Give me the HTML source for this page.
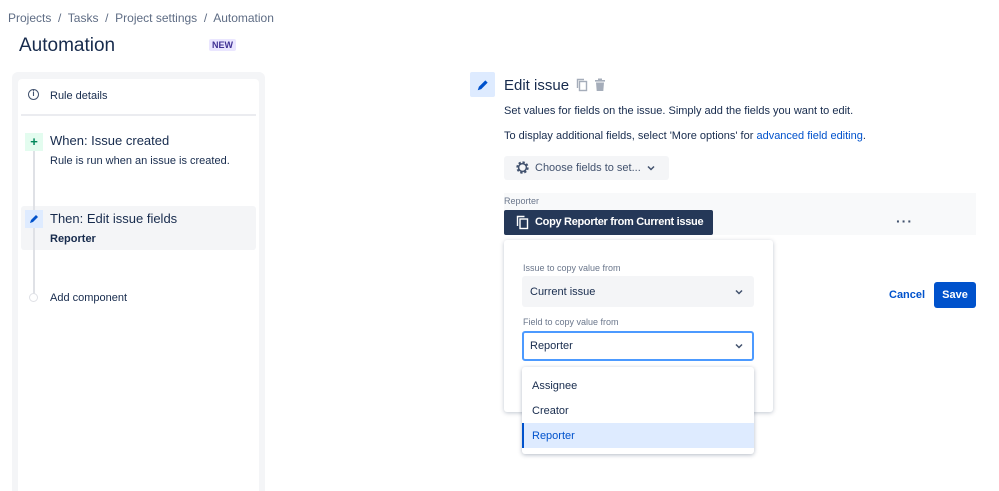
<!DOCTYPE html>
<html><head><style>
*{margin:0;padding:0;box-sizing:border-box}
html,body{width:999px;height:491px;overflow:hidden}
body{background:#fff;font-family:"Liberation Sans",sans-serif;color:#172b4d;position:relative}
.a{position:absolute;white-space:nowrap}
</style></head><body>
<div class="a" style="left:8px;top:11px;font-size:12px;color:#5e6c84">Projects &nbsp;/&nbsp; Tasks &nbsp;/&nbsp; Project settings &nbsp;/&nbsp; Automation</div>
<div class="a" style="left:19px;top:35px;font-size:19px;font-weight:500;color:#172b4d">Automation</div>
<div class="a" style="left:209px;top:39px;font-size:9px;font-weight:bold;color:#403294;background:#eae6ff;padding:1px 3px;border-radius:2px">NEW</div>

<div class="a" style="left:12px;top:72px;width:253px;height:430px;background:#f4f5f7;border-radius:6px"></div>
<div class="a" style="left:18px;top:79px;width:241px;height:420px;background:#fff;border-radius:4px"></div>
<div class="a" style="left:28px;top:89px;width:11px;height:11px;border:1.3px solid #42526e;border-radius:50%;font-size:8px;line-height:8px;text-align:center;color:#42526e;font-weight:bold">i</div>
<div class="a" style="left:50px;top:90px;font-size:11px;color:#172b4d">Rule details</div>
<div class="a" style="left:21px;top:114px;width:235px;height:2px;background:#ebecf0"></div>
<div class="a" style="left:21px;top:206px;width:235px;height:44px;background:#f4f5f7;border-radius:3px"></div>
<div class="a" style="left:33px;top:140px;width:2px;height:158px;background:#dfe1e6"></div>
<div class="a" style="left:25px;top:133px;width:18px;height:18px;background:#e3fcef;color:#00875a;font-size:13px;font-weight:bold;text-align:center;line-height:18px">+</div>
<div class="a" style="left:50px;top:133px;font-size:13px;color:#172b4d">When: Issue created</div>
<div class="a" style="left:50px;top:155px;font-size:11px;color:#172b4d">Rule is run when an issue is created.</div>
<div class="a" style="left:25px;top:210px;width:18px;height:18px;background:#deebff"></div>
<svg class="a" style="left:28px;top:213px" width="12" height="12" viewBox="0 0 12 12"><path d="M2 10 L3 7 L8 2 L10 4 L5 9 Z" fill="#0052cc"/></svg>
<div class="a" style="left:50px;top:211px;font-size:13px;color:#172b4d">Then: Edit issue fields</div>
<div class="a" style="left:50px;top:233px;font-size:11px;font-weight:bold;color:#172b4d">Reporter</div>
<div class="a" style="left:29px;top:293px;width:9px;height:9px;border:1px solid #dfe1e6;border-radius:50%;background:#fff"></div>
<div class="a" style="left:50px;top:292px;font-size:11px;color:#172b4d">Add component</div>

<div class="a" style="left:470px;top:72px;width:25px;height:25px;background:#deebff;border-radius:2px"></div>
<svg class="a" style="left:476px;top:78px" width="14" height="14" viewBox="0 0 12 12"><path d="M1.5 10.5 L2.5 7.5 L8 2 L10 4 L4.5 9.5 Z" fill="#0052cc"/></svg>
<div class="a" style="left:504px;top:77px;font-size:15px;color:#172b4d">Edit issue</div>
<svg class="a" style="left:576px;top:78px" width="13" height="14" viewBox="0 0 13 14"><rect x="3.5" y="3.5" width="7" height="9" fill="none" stroke="#a5adba" stroke-width="1.4"/><path d="M1.5 10V1.5H8" fill="none" stroke="#a5adba" stroke-width="1.4"/></svg>
<svg class="a" style="left:594px;top:78px" width="12" height="14" viewBox="0 0 12 14"><rect x="1" y="2" width="10" height="1.6" fill="#a5adba"/><rect x="4" y="0.5" width="4" height="2" fill="#a5adba"/><path d="M2 4.5H10L9.3 13H2.7Z" fill="#a5adba"/></svg>
<div class="a" style="left:504px;top:105px;font-size:11px;color:#172b4d">Set values for fields on the issue. Simply add the fields you want to edit.</div>
<div class="a" style="left:504px;top:130px;font-size:11px;color:#172b4d">To display additional fields, select 'More options' for <span style="color:#0052cc">advanced field editing</span>.</div>
<div class="a" style="left:504px;top:156px;width:165px;height:24px;background:#f4f5f7;border-radius:3px"></div>
<svg class="a" style="left:515px;top:160px" width="15" height="15" viewBox="0 0 16 16"><circle cx="8" cy="8" r="5" fill="none" stroke="#42526e" stroke-width="3.2" stroke-dasharray="2.2 1.7"/><circle cx="8" cy="8" r="4.2" fill="none" stroke="#42526e" stroke-width="1.6"/></svg>
<div class="a" style="left:535px;top:162px;font-size:11px;color:#42526e">Choose fields to set...</div>
<svg class="a" style="left:647px;top:165px" width="8" height="6" viewBox="0 0 8 6"><path d="M1 1.5L4 4.5L7 1.5" fill="none" stroke="#42526e" stroke-width="1.5"/></svg>
<div class="a" style="left:504px;top:193px;width:472px;height:42px;background:#f8f9fa"></div>
<div class="a" style="left:504px;top:196px;font-size:9px;color:#6b778c">Reporter</div>
<div class="a" style="left:504px;top:210px;width:209px;height:25px;background:#253858;border-radius:2px"></div>
<svg class="a" style="left:516px;top:215px" width="13" height="15" viewBox="0 0 13 15"><rect x="4" y="4" width="7.5" height="9.5" fill="none" stroke="#fff" stroke-width="1.4"/><path d="M1.5 11V1.5H8.5" fill="none" stroke="#fff" stroke-width="1.4"/></svg>
<div class="a" style="left:535px;top:216px;font-size:11px;font-weight:bold;color:#fff;letter-spacing:-0.3px">Copy Reporter from Current issue</div>
<div class="a" style="left:896px;top:213px;font-size:14px;font-weight:bold;color:#42526e;letter-spacing:1px">···</div>

<div class="a" style="left:504px;top:240px;width:269px;height:172px;background:#fff;border-radius:3px;box-shadow:0 1px 4px rgba(9,30,66,.25)"></div>
<div class="a" style="left:523px;top:263px;font-size:9px;color:#6b778c">Issue to copy value from</div>
<div class="a" style="left:522px;top:276px;width:232px;height:31px;background:#f4f5f7;border-radius:3px"></div>
<div class="a" style="left:530px;top:286px;font-size:11px;color:#172b4d">Current issue</div>
<svg class="a" style="left:735px;top:289px" width="8" height="6" viewBox="0 0 8 6"><path d="M1 1.5L4 4.5L7 1.5" fill="none" stroke="#42526e" stroke-width="1.5"/></svg>
<div class="a" style="left:523px;top:317px;font-size:9px;color:#6b778c">Field to copy value from</div>
<div class="a" style="left:522px;top:331px;width:232px;height:30px;border:2px solid #4c9aff;border-radius:3px;background:#fff"></div>
<div class="a" style="left:530px;top:340px;font-size:11px;color:#172b4d">Reporter</div>
<svg class="a" style="left:735px;top:343px" width="8" height="6" viewBox="0 0 8 6"><path d="M1 1.5L4 4.5L7 1.5" fill="none" stroke="#42526e" stroke-width="1.5"/></svg>
<div class="a" style="left:522px;top:367px;width:232px;height:87px;background:#fff;border-radius:3px;box-shadow:0 1px 4px rgba(9,30,66,.3)"></div>
<div class="a" style="left:532px;top:380px;font-size:11px;color:#172b4d">Assignee</div>
<div class="a" style="left:532px;top:405px;font-size:11px;color:#172b4d">Creator</div>
<div class="a" style="left:522px;top:423px;width:232px;height:25px;background:#deebff;border-left:2px solid #0052cc"></div>
<div class="a" style="left:532px;top:430px;font-size:11px;color:#0052cc">Reporter</div>

<div class="a" style="left:889px;top:289px;font-size:11px;font-weight:bold;color:#0052cc">Cancel</div>
<div class="a" style="left:934px;top:282px;width:42px;height:26px;background:#0052cc;border-radius:3px;color:#fff;font-size:11px;font-weight:bold;text-align:center;line-height:26px">Save</div>
</body></html>
